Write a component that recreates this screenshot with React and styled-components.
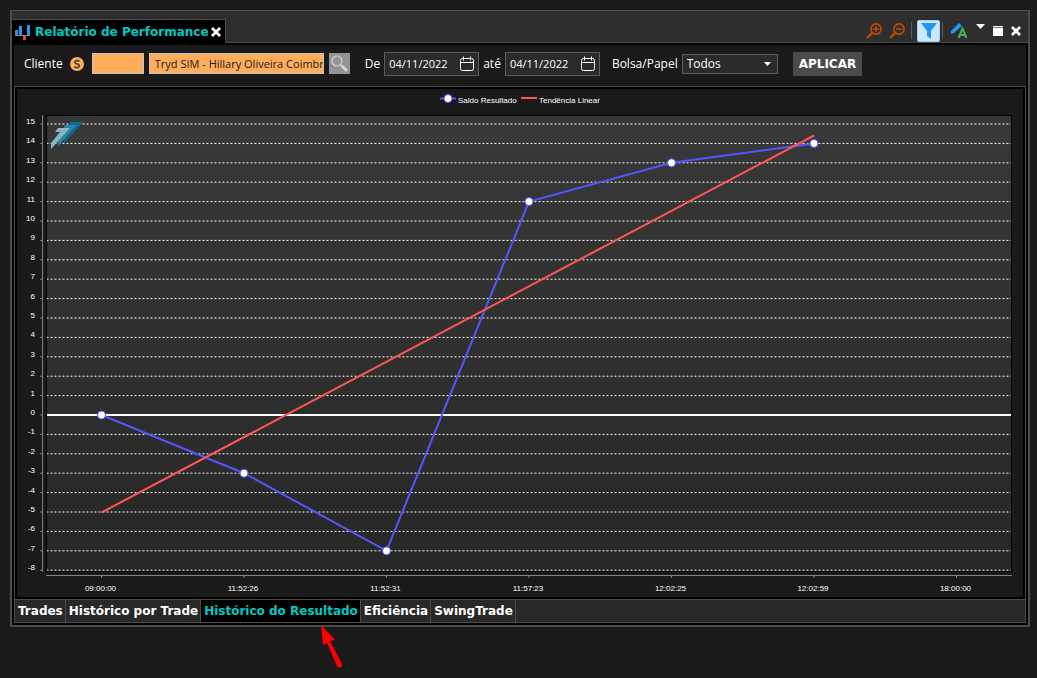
import { useState } from "react";
import styled, { createGlobalStyle } from "styled-components";

const GlobalStyle = createGlobalStyle`
  * {
    box-sizing: border-box;
  }

  body {
    margin: 0;
    background: #1a1a1a;
    color: #ffffff;
    font-family: "Open Sans", "Noto Sans", sans-serif;
    font-size: 12px;
  }

  button, input, select {
    font-family: inherit;
    font-size: inherit;
    color: inherit;
    margin: 0;
  }
`;

const Page = styled.div`
  min-height: 100vh;
  padding: 10px 7px 50px 10px;
`;

const Window = styled.main`
  border: 2px solid #4b4b4b;
  border-top-width: 1px;
  background: #000000;
`;

const TitleBar = styled.header`
  display: flex;
  justify-content: space-between;
  height: 32px;
  padding-top: 8px;
  background: #2e2e2e;
  border-bottom: 1px solid #4b4b4b;
`;

const TitleTab = styled.div`
  display: flex;
  align-items: center;
  height: 24px;
  padding: 0 4px 0 3px;
  background: #000000;
  border: 1px solid #4b4b4b;
  border-width: 1px 1px 0 0;
`;

const Title = styled.h1`
  margin: 0 2px 0 4px;
  color: #00c8c4;
  font-family: "DejaVu Sans", sans-serif;
  font-size: 12px;
  font-weight: bold;
  line-height: 16px;
  white-space: nowrap;
`;

const WindowActions = styled.div`
  display: flex;
  align-items: center;
  gap: 8px;
  padding-right: 7px;
`;

const IconButton = styled.button`
  display: flex;
  align-items: center;
  justify-content: center;
  width: ${props => props.$width || 17}px;
  height: ${props => props.$height || 18}px;
  padding: 0;
  border: none;
  background: none;
  cursor: pointer;
`;

const FilterButton = styled(IconButton)`
  width: 23px;
  height: 22px;
  background: #cce8ff;
  border: 1px solid #99d1ff;
  border-radius: 2px;
`;

const ActionGroup = styled.div`
  display: flex;
  align-items: center;
  gap: ${props => props.$gap}px;
`;

const Separator = styled.span`
  width: 1px;
  height: 17px;
  background: #5a5a5a;
`;

const Body = styled.div`
  padding: 2px;
`;

const Toolbar = styled.form`
  display: flex;
  align-items: center;
  height: 41px;
  padding: 0 10px 4px;
  background: #1a1a1a;
  white-space: nowrap;
`;

const Field = styled.div`
  display: flex;
  align-items: center;
  gap: ${props => props.$gap || 4}px;
  margin-right: ${props => props.$after || 0}px;
`;

const Label = styled.label`
  line-height: 16px;
`;

const ClientInput = styled.input`
  width: ${props => props.$width}px;
  height: 21px;
  padding: 0 0 0 5px;
  background: #ffad5c;
  border: 1px solid #c4c4c4;
  color: #1a1a1a;
  font-size: 11px;
`;

const SearchButton = styled(IconButton)`
  width: 21px;
  height: 21px;
  background: #949494;
`;

const DateBox = styled.div`
  display: flex;
  align-items: center;
  width: 95px;
  height: 24px;
  padding: 0 3px 0 4px;
  background: #2b2b2b;
  border: 1px solid #5e5e5e;
`;

const DateInput = styled.input`
  flex: 1;
  min-width: 0;
  padding: 0;
  border: none;
  background: none;
  font-size: 11px;
`;

const SelectBox = styled.div`
  display: flex;
  align-items: center;
  width: 96px;
  height: 20px;
  padding-right: 6px;
  background: #2b2b2b;
  border: 1px solid #5e5e5e;
`;

const Select = styled.select`
  flex: 1;
  min-width: 0;
  padding: 0 4px;
  appearance: none;
  border: none;
  background: #2b2b2b;
`;

const ApplyButton = styled.button`
  height: 24px;
  padding: 0 6px;
  background: #4b4b4b;
  border: none;
  font-family: "DejaVu Sans", sans-serif;
  font-weight: bold;
`;

const Panel = styled.section`
  border: 1px solid #4b4b4b;
  border-bottom: none;
  padding: 2px;
`;

const Chart = styled.svg`
  display: block;
  width: 100%;
  height: auto;
  background: #1a1a1a;
`;

const ChartText = styled.text`
  fill: #ffffff;
  font-family: "Liberation Sans", sans-serif;
  font-size: 8px;
`;

const TabBar = styled.nav`
  display: flex;
  height: 24px;
  background: #282828;
  border: 1px solid #4b4b4b;
`;

const TabItem = styled.div`
  position: relative;
  display: flex;
  border-right: 1px solid #4b4b4b;
`;

const Tab = styled.button`
  padding: 0 2px 0 3px;
  border: none;
  background: ${props => props.$active ? "#000000" : "#282828"};
  color: ${props => props.$active ? "#00c8c4" : "#ffffff"};
  font-family: "DejaVu Sans", sans-serif;
  font-weight: bold;
  line-height: 16px;
  white-space: nowrap;
  cursor: pointer;
`;

const Pointer = styled.svg`
  position: absolute;
  top: 25px;
  left: 120px;
`;

const tabs = ["Trades", "Histórico por Trade", "Histórico do Resultado", "Eficiência", "SwingTrade"];
const times = ["09:00:00", "11:52:26", "11:52:31", "11:57:23", "12:02:25", "12:02:59", "18:00:00"];
const results = [0, -3, -7, 11, 13, 14];
const levels = Array.from({ length: 24 }, (_, i) => 15 - i);

const xAt = index => 84.5 + index * 142.5;
const yAt = value => 326 - value * 19.4;

function CloseIcon() {
    return (
        <svg width="10" height="10" viewBox="0 0 10 10" stroke="#fff" strokeWidth="2.8">
            <path d="M1 1l8 8M9 1L1 9" />
        </svg>
    );
}

function ZoomIcon({ plus }) {
    return (
        <svg width="16" height="16" viewBox="0 0 16 16" fill="none" stroke="#c24a00">
            <circle cx="10" cy="6" r="5.1" strokeWidth="1.6" />
            <path d="M6.3 9.7L1 15" strokeWidth="2.3" />
            <path d={plus ? "M7 6h6M10 3v6" : "M7 6h6"} strokeWidth="1.5" />
        </svg>
    );
}

function CalendarIcon() {
    return (
        <svg width="15" height="16" viewBox="0 0 15 16" fill="none" stroke="#fff">
            <rect x="0.5" y="2.5" width="13" height="12" rx="2" />
            <path d="M0.5 6.5h13M3.5 0.5v4M10.5 0.5v4" />
        </svg>
    );
}

function DateField({ id, label, value, after }) {
    return (
        <Field $after={after}>
            <Label htmlFor={id}>{label}</Label>
            <DateBox>
                <DateInput id={id} defaultValue={value} />
                <IconButton type="button" aria-label="Calendário" $width={15}><CalendarIcon /></IconButton>
            </DateBox>
        </Field>
    );
}

function ResultChart() {
    const line = results.map((val, i) => xAt(i) + "," + yAt(val)).join(" ");
    return (
        <Chart viewBox="0 0 1006 508" role="img" aria-label="Histórico do Resultado">
            <defs>
                <linearGradient id="plot" x1="0" y1="0" x2="0" y2="1">
                    <stop offset="0" stopColor="#383838" />
                    <stop offset="1" stopColor="#272727" />
                </linearGradient>
            </defs>

            {/* legend */}
            <path d="M423 9.5h16" stroke="#5555ff" strokeWidth="2" />
            <circle cx="431" cy="9.5" r="4" fill="#fff" stroke="#5555ff" />
            <ChartText x="441" y="14">Saldo Resultado</ChartText>
            <path d="M504 9h16" stroke="#ff5555" strokeWidth="2" />
            <ChartText x="522" y="14">Tendência Linear</ChartText>

            <rect x="29.5" y="26.5" width="965" height="456" fill="url(#plot)" stroke="#000" />
            <path d="M25.5 26v457M29 486.5h966" stroke="#808080" />

            {levels.map(val => (
                <g key={val}>
                    <path d={`M30 ${yAt(val)}h964`} stroke="#fff" strokeDasharray="2 2" strokeDashoffset="0.5" />
                    <path d={`M23 ${yAt(val)}h2`} stroke="#808080" />
                    <ChartText x="18" y={yAt(val)} textAnchor="end">{val}</ChartText>
                </g>
            ))}

            {/* logo */}
            <path d="M54 33h12L47 54v-3l13-14h-8z" fill="#08709f" />
            <path d="M48 36h12L41 57v-5l10-12h-5z" fill="#2488ad" />
            <path d="M41 39h12L34 60v-6l9-11h-5z" fill="#8ab4c4" />

            {times.map((val, i) => (
                <g key={val}>
                    <path d={`M${xAt(i)} 487v2`} stroke="#808080" />
                    <ChartText x={xAt(i) - 1} y="502" textAnchor="middle">{val}</ChartText>
                </g>
            ))}

            <path d="M30 326h964" stroke="#fff" strokeWidth="2" />
            <polyline points={line} fill="none" stroke="#5555ff" strokeWidth="2" />
            {results.map((val, i) => (
                <circle key={i} cx={xAt(i)} cy={yAt(val)} r="4" fill="#fff" stroke="#5555ff" />
            ))}
            <path d="M84.5 423.5L797 46.5" stroke="#ff5555" strokeWidth="2" />
        </Chart>
    );
}

function App() {
    const [active, setActive] = useState(2);

    return (
        <Page>
            <GlobalStyle />
            <Window>
                <TitleBar>
                    <TitleTab>
                        <svg width="16" height="16" viewBox="0 0 16 16">
                            <path d="M0 6h3v5H0zM4 2h3v9H4zM12 1h3v10h-3z" fill="#2196f3" />
                            <path d="M8 12h3v4H8z" fill="#f44336" />
                            <path d="M0 11h15v1H0z" fill="#8a8a8a" />
                        </svg>
                        <Title>Relatório de Performance</Title>
                        <IconButton aria-label="Fechar aba" $width={10}><CloseIcon /></IconButton>
                    </TitleTab>
                    <WindowActions>
                        <ActionGroup $gap={5}>
                            <ActionGroup $gap={6}>
                                <IconButton aria-label="Aumentar zoom"><ZoomIcon plus /></IconButton>
                                <IconButton aria-label="Diminuir zoom"><ZoomIcon /></IconButton>
                                <Separator />
                            </ActionGroup>
                            <ActionGroup $gap={2}>
                                <FilterButton aria-label="Filtrar">
                                    <svg width="16" height="16" viewBox="0 0 16 16">
                                        <path d="M0 0h16l-6 8v8l-4-3V8z" fill="#2196f3" />
                                    </svg>
                                </FilterButton>
                                <Separator />
                            </ActionGroup>
                        </ActionGroup>
                        <IconButton aria-label="Formatar">
                            <svg width="17" height="17" viewBox="0 0 17 17">
                                <path d="M0 9l8-8 3 3-8 7-3 1z" fill="#2196f3" />
                                <path d="M7.5 16L11.5 6.5L15.5 16M9 13h5" fill="none" stroke="#4caf50" strokeWidth="2" />
                            </svg>
                        </IconButton>
                        <IconButton aria-label="Menu" $width={9}>
                            <svg width="9" height="14" viewBox="0 0 9 14">
                                <path d="M0 0h9L4.5 5z" fill="#fff" />
                            </svg>
                        </IconButton>
                        <IconButton aria-label="Maximizar" $width={10}>
                            <svg width="10" height="10" viewBox="0 0 10 10">
                                <path d="M0 0h10v10H0z" fill="#fff" />
                                <path d="M0 1.5h10" stroke="#777" />
                            </svg>
                        </IconButton>
                        <IconButton aria-label="Fechar" $width={10}><CloseIcon /></IconButton>
                    </WindowActions>
                </TitleBar>
                <Body>
                    <Toolbar onSubmit={e => e.preventDefault()}>
                        <Field $gap={5} $after={15}>
                            <Label htmlFor="client">Cliente</Label>
                            <IconButton type="button" aria-label="Simulador" $width={19}>
                                <svg width="14" height="14" viewBox="0 0 14 14">
                                    <circle cx="7" cy="7" r="7" fill="#ffad5c" />
                                    <path d="M9.5 4.3C8 3.2 4.8 3.2 4.8 5.2C4.8 7.3 9.4 6.5 9.4 8.8C9.4 10.8 6 11 4.3 9.7" fill="none" stroke="#444" strokeWidth="1.7" />
                                </svg>
                            </IconButton>
                            <ClientInput id="client" $width={52} />
                            <ClientInput aria-label="Nome do cliente" $width={175} defaultValue="Tryd SIM - Hillary Oliveira Coimbra" />
                            <SearchButton type="button" aria-label="Buscar">
                                <svg width="17" height="17" viewBox="0 0 17 17" fill="none" stroke="#d6d6d6">
                                    <circle cx="6" cy="6" r="5" strokeWidth="1.2" />
                                    <path d="M9.5 9.5l2 2" />
                                    <path d="M11.5 11.5l3.5 3.5" strokeWidth="3" strokeLinecap="round" />
                                </svg>
                            </SearchButton>
                        </Field>
                        <DateField id="from" label="De" value="04/11/2022" after={4} />
                        <DateField id="to" label="até" value="04/11/2022" after={12} />
                        <Field $after={15}>
                            <Label htmlFor="paper">Bolsa/Papel</Label>
                            <SelectBox>
                                <Select id="paper">
                                    <option>Todos</option>
                                </Select>
                                <svg width="7" height="4" viewBox="0 0 7 4">
                                    <path d="M0 0h7L3.5 4z" fill="#fff" />
                                </svg>
                            </SelectBox>
                        </Field>
                        <ApplyButton>APLICAR</ApplyButton>
                    </Toolbar>
                    <Panel>
                        <ResultChart />
                    </Panel>
                    <TabBar>
                        {tabs.map((val, key) => (
                            <TabItem key={key}>
                                <Tab $active={key === active} onClick={() => setActive(key)}>{val}</Tab>
                                {key === 2 && (
                                    <Pointer width="24" height="44" viewBox="0 0 24 44">
                                        <path d="M0 0l14 15-5 1 12 23c1 3-3 5-5 2L6 18l-4 2z" fill="#ff0000" />
                                    </Pointer>
                                )}
                            </TabItem>
                        ))}
                    </TabBar>
                </Body>
            </Window>
        </Page>
    );
}

export default App;
